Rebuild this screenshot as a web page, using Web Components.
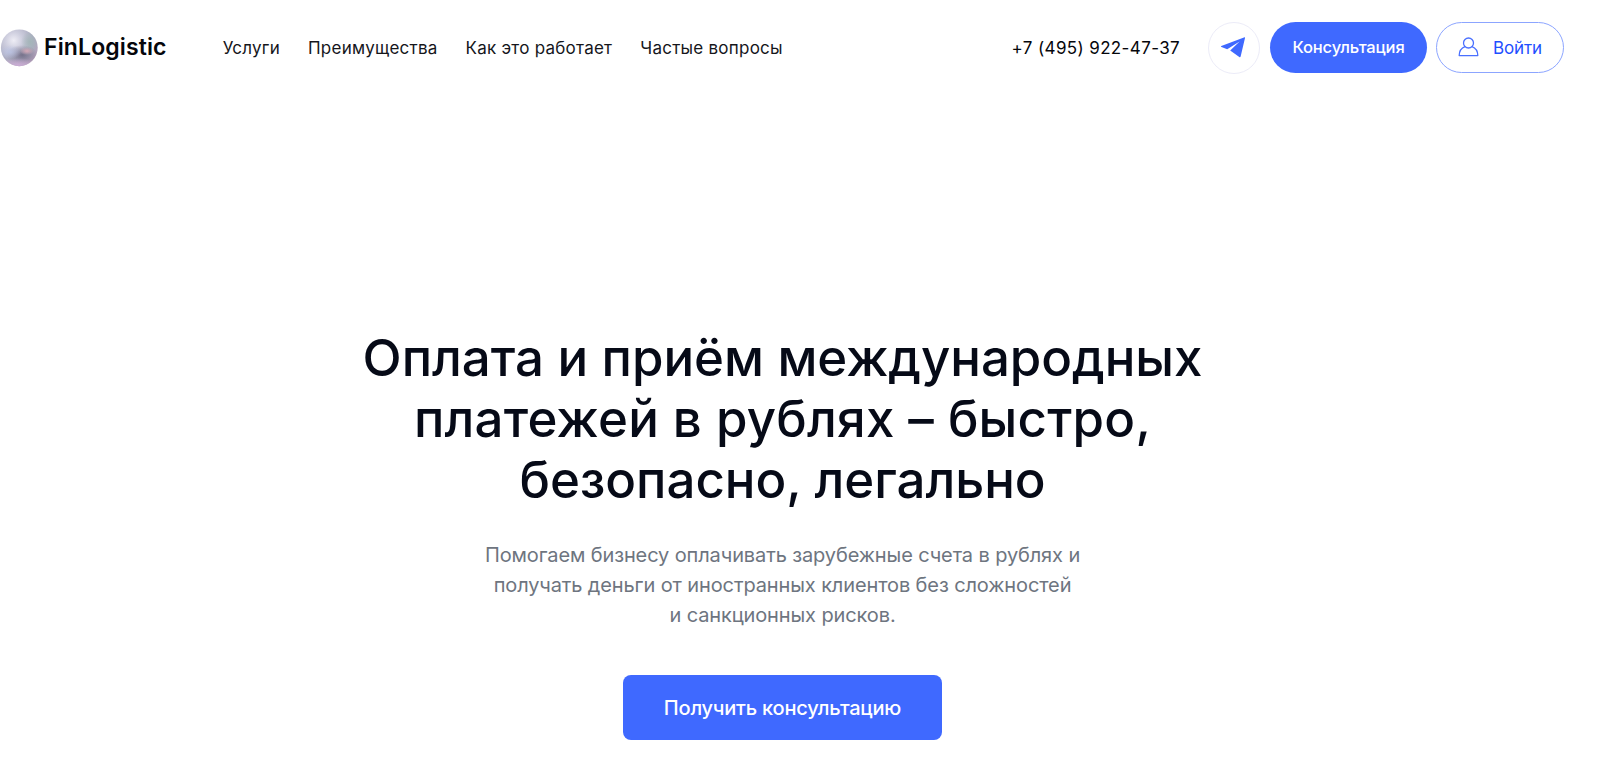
<!DOCTYPE html>
<html lang="ru">
<head>
<meta charset="utf-8">
<title>FinLogistic</title>
<style>
  body {
    margin: 0;
    background: #fff;
    color: #060a17;
    font-family: Inter, "Liberation Sans", sans-serif;
  }
  .wide {
    letter-spacing: 0.22px;
  }
</style>
</head>
<body>
<fin-page>
  <fin-header slot="header">
    <fin-logo slot="logo">FinLogistic</fin-logo>
    <nav-link>Услуги</nav-link>
    <nav-link>Преимущества</nav-link>
    <nav-link>Как это работает</nav-link>
    <nav-link>Частые вопросы</nav-link>
    <phone-link slot="actions">+7 (495) 922-47-37</phone-link>
    <telegram-button slot="actions"></telegram-button>
    <pill-button slot="actions">Консультация</pill-button>
    <login-button slot="actions">Войти</login-button>
  </fin-header>
  <fin-hero>
    <span slot="title">Оплата и приём международных<br><span class="wide">платежей в рублях – быстро,</span><br>безопасно, легально</span>
    <span slot="text">Помогаем бизнесу оплачивать зарубежные счета в рублях и<br>получать деньги от иностранных клиентов без сложностей<br>и санкционных рисков.</span>
    <cta-button slot="action">Получить консультацию</cta-button>
  </fin-hero>
</fin-page>

<script>
function define(name, html) {
  const template = document.createElement('template');
  template.innerHTML = html;
  customElements.define(name, class extends HTMLElement {
    constructor() {
      super();
      this.attachShadow({ mode: 'open' });
      this.shadowRoot.appendChild(template.content.cloneNode(true));
    }
  });
}

define('fin-page', `
  <style>
    :host {
      display: block;
      width: 1565px;
      height: 764px;
      overflow: hidden;
    }
  </style>
  <slot name="header"></slot>
  <slot></slot>
`);

define('fin-header', `
  <style>
    :host {
      display: flex;
      align-items: center;
      height: 95px;
    }
    nav {
      display: flex;
      gap: 28px;
      margin-left: 56px;
    }
    .actions {
      display: flex;
      align-items: center;
      margin-left: auto;
    }
  </style>
  <slot name="logo"></slot>
  <nav><slot></slot></nav>
  <div class="actions"><slot name="actions"></slot></div>
`);

define('fin-logo', `
  <style>
    :host {
      display: flex;
      align-items: center;
      gap: 6px;
      font-size: 23px;
      font-weight: 600;
      letter-spacing: 0.13px;
      color: #05060b;
    }
    svg {
      display: block;
      width: 38px;
      height: 38px;
    }
    span {
      margin-top: -2px;
    }
  </style>
  <svg viewBox="0 0 38 38">
    <defs>
      <radialGradient id="base" cx="0.36" cy="0.3" r="0.72">
        <stop offset="0" stop-color="#eeedf5"/>
        <stop offset="0.3" stop-color="#cfcfdf"/>
        <stop offset="0.7" stop-color="#adaec2"/>
        <stop offset="1" stop-color="#b5a2bc"/>
      </radialGradient>
      <radialGradient id="dark">
        <stop offset="0" stop-color="#5d5671" stop-opacity="0.7"/>
        <stop offset="1" stop-color="#5d5671" stop-opacity="0"/>
      </radialGradient>
      <radialGradient id="pink">
        <stop offset="0" stop-color="#d5a9b7"/>
        <stop offset="1" stop-color="#d5a9b7" stop-opacity="0"/>
      </radialGradient>
      <radialGradient id="blue">
        <stop offset="0" stop-color="#bcc5e6" stop-opacity="0.8"/>
        <stop offset="1" stop-color="#bcc5e6" stop-opacity="0"/>
      </radialGradient>
      <radialGradient id="rim">
        <stop offset="0" stop-color="#c9acd4"/>
        <stop offset="1" stop-color="#c9acd4" stop-opacity="0"/>
      </radialGradient>
      <radialGradient id="green">
        <stop offset="0" stop-color="#a3b5b8"/>
        <stop offset="1" stop-color="#a3b5b8" stop-opacity="0"/>
      </radialGradient>
      <clipPath id="ball"><circle cx="19.3" cy="18.8" r="18.4"/></clipPath>
    </defs>
    <g clip-path="url(#ball)">
      <rect width="38" height="38" fill="url(#base)"/>
      <ellipse cx="30" cy="13" rx="9" ry="11" fill="url(#green)"/>
      <ellipse cx="22" cy="26" rx="16" ry="10" fill="url(#dark)"/>
      <ellipse cx="10" cy="23" rx="11" ry="7" fill="url(#blue)"/>
      <ellipse cx="27" cy="22" rx="7" ry="4" fill="url(#pink)"/>
      <ellipse cx="18" cy="36" rx="19" ry="7" fill="url(#rim)"/>
    </g>
  </svg>
  <span><slot></slot></span>
`);

define('nav-link', `
  <style>
    :host {
      display: block;
      font-size: 17px;
      letter-spacing: 0.24px;
      line-height: 24px;
      white-space: nowrap;
      color: #15161b;
    }
  </style>
  <slot></slot>
`);

define('phone-link', `
  <style>
    :host {
      display: block;
      margin-right: 28px;
      font-size: 17px;
      letter-spacing: 0.37px;
      line-height: 24px;
      white-space: nowrap;
      color: #05060b;
    }
  </style>
  <slot></slot>
`);

define('telegram-button', `
  <style>
    :host {
      display: flex;
      box-sizing: border-box;
      width: 52px;
      height: 52px;
      margin-right: 10px;
      border: 1px solid #ececf8;
      border-radius: 50%;
    }
    svg {
      width: 50px;
      height: 50px;
    }
  </style>
  <svg viewBox="0 0 50 50">
    <path fill="#3f69ff" d="M35.6 14.2 L12.3 22.9 C11.9 23.2 12 23.8 12.5 24 L18.2 26.3 L30.6 18.6 L21.2 27.6 L30.3 34 C31 34.4 31.5 34.1 31.7 33.3 L36 14.9 C36.1 14.3 36 14.1 35.6 14.2 Z"/>
  </svg>
`);

define('pill-button', `
  <style>
    :host {
      display: flex;
      align-items: center;
      justify-content: center;
      box-sizing: border-box;
      width: 157px;
      height: 51px;
      margin-right: 9px;
      padding-bottom: 1px;
      border-radius: 26px;
      background: #3f69ff;
      color: #fff;
      font-size: 16.5px;
      font-weight: 500;
      letter-spacing: -0.15px;
    }
  </style>
  <slot></slot>
`);

define('login-button', `
  <style>
    :host {
      display: flex;
      align-items: center;
      justify-content: center;
      gap: 14px;
      box-sizing: border-box;
      width: 128px;
      height: 51px;
      margin-right: 1px;
      border: 1px solid #8ca5ff;
      border-radius: 26px;
      color: #1f50ff;
      font-size: 17px;
      letter-spacing: -0.1px;
    }
    svg {
      width: 21px;
      height: 20px;
      margin-top: -2px;
    }
  </style>
  <svg viewBox="0 0 21 20" fill="none" stroke="#4a70ff" stroke-width="1.3" stroke-linejoin="round">
    <circle cx="10.5" cy="6" r="5"/>
    <path d="M7 9.7 C3.5 11 1.3 14 1.2 18.6 H19.8 C19.7 14 17.5 11 14 9.7"/>
  </svg>
  <slot></slot>
`);

define('fin-hero', `
  <style>
    :host {
      display: flex;
      flex-direction: column;
      align-items: center;
      padding-top: 232px;
      text-align: center;
    }
    h1 {
      margin: 0;
      font-size: 51px;
      font-weight: 500;
      letter-spacing: -0.05px;
      line-height: 61px;
      white-space: nowrap;
    }
    p {
      margin: 30px 0 45px;
      font-size: 20px;
      letter-spacing: -0.12px;
      line-height: 30px;
      white-space: nowrap;
      color: #6e757f;
    }
  </style>
  <h1><slot name="title"></slot></h1>
  <p><slot name="text"></slot></p>
  <slot name="action"></slot>
`);

define('cta-button', `
  <style>
    :host {
      display: flex;
      align-items: center;
      justify-content: center;
      width: 319px;
      height: 65px;
      border-radius: 8px;
      background: #3f69ff;
      color: #fff;
      font-size: 20px;
      font-weight: 500;
      letter-spacing: -0.2px;
    }
  </style>
  <slot></slot>
`);
</script>
</body>
</html>
